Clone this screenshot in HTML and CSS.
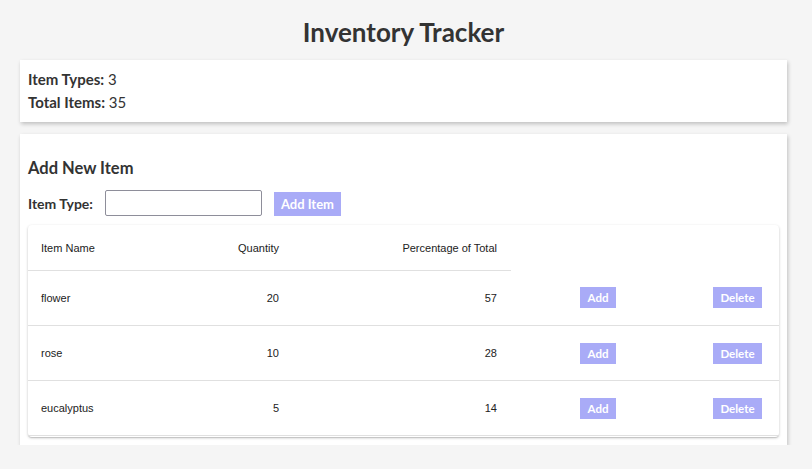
FILE: index.html
```html
<!DOCTYPE html>
<html>
<head>
<meta charset="utf-8">
<title>Inventory Tracker</title>
<link rel="stylesheet" href="styles.css">
</head>
<body>
<div class="app">
  <h1 class="title">Inventory Tracker</h1>
  <div class="card summary">
    <div class="line"><b>Item Types:</b> 3</div>
    <div class="line"><b>Total Items:</b> 35</div>
  </div>
  <div class="card main">
    <h3 class="section-title">Add New Item</h3>
    <div class="form-row">
      <label class="label">Item Type:</label>
      <input class="text-input" type="text">
      <button class="btn btn-lg">Add Item</button>
    </div>
    <div class="paper">
      <table class="table">
        <colgroup>
          <col class="c1"><col class="c2"><col class="c3"><col class="c4"><col class="c5">
        </colgroup>
        <thead>
          <tr class="head-row">
            <th class="left">Item Name</th>
            <th class="right">Quantity</th>
            <th class="right">Percentage of Total</th>
          </tr>
        </thead>
        <tbody>
          <tr>
            <td class="left">flower</td>
            <td class="right">20</td>
            <td class="right">57</td>
            <td class="center"><button class="btn btn-sm btn-add">Add</button></td>
            <td class="right end"><button class="btn btn-sm btn-del">Delete</button></td>
          </tr>
          <tr>
            <td class="left">rose</td>
            <td class="right">10</td>
            <td class="right">28</td>
            <td class="center"><button class="btn btn-sm btn-add">Add</button></td>
            <td class="right end"><button class="btn btn-sm btn-del">Delete</button></td>
          </tr>
          <tr>
            <td class="left">eucalyptus</td>
            <td class="right">5</td>
            <td class="right">14</td>
            <td class="center"><button class="btn btn-sm btn-add">Add</button></td>
            <td class="right end"><button class="btn btn-sm btn-del">Delete</button></td>
          </tr>
        </tbody>
      </table>
    </div>
  </div>
</div>
</body>
</html>
```
FILE: styles.css
```css
html, body {
  margin: 0;
  padding: 0;
  background: #f5f5f5;
}
body {
  font-family: Lato, "Liberation Sans", sans-serif;
  color: #333;
}
.app {
  margin: 0 25px 0 20px;
  padding-top: 17px;
}
.title {
  margin: 0 0 12px 0;
  text-align: center;
  font-size: 26px;
  font-weight: 700;
  line-height: 31px;
  color: #333;
}
.card {
  background: #fff;
  box-shadow: 1px 2px 4px rgba(0, 0, 0, 0.22);
  padding: 8px;
}
.summary {
  font-size: 15px;
  line-height: 23px;
}
.summary b {
  font-weight: 700;
}
.main {
  margin-top: 12px;
  padding-bottom: 8px;
}
.section-title {
  margin: 16px 0 12px 0;
  font-size: 16.5px;
  line-height: 20px;
  font-weight: 700;
}
.form-row {
  display: flex;
  align-items: center;
  height: 26px;
}
.label {
  font-size: 14px;
  font-weight: 700;
  margin-right: 12px;
}
.text-input {
  box-sizing: border-box;
  width: 157px;
  height: 26px;
  border: 1px solid #8e8e9a;
  border-radius: 2px;
  margin: 0 12px 0 0;
  padding: 0 4px;
  background: #fff;
}
.btn {
  border: none;
  background: #a9abf7;
  color: #fff;
  font-family: Lato, "Liberation Sans", sans-serif;
  font-weight: 700;
  padding: 0;
  cursor: pointer;
}
.btn-lg {
  width: 67px;
  height: 24px;
  font-size: 13px;
  margin-top: 2px;
}
.btn-sm {
  height: 21px;
  font-size: 11.5px;
  padding: 0;
}
.btn-add { width: 36px; }
.btn-del { width: 49px; }
.paper {
  margin-top: 9px;
  background: #fff;
  border-radius: 4px;
  box-shadow: 0 1px 3px rgba(0, 0, 0, 0.2), 0 1px 1px rgba(0, 0, 0, 0.12);
  overflow: hidden;
  padding-bottom: 1px;
}
.table {
  width: 100%;
  border-collapse: collapse;
  table-layout: fixed;
  font-family: "Liberation Sans", Arial, sans-serif;
  font-size: 11px;
  color: #222;
}
.c1 { width: 137px; }
.c2 { width: 128px; }
.c3 { width: 218px; }
.c4 { width: 174px; }
.c5 { width: 94px; }
.table th {
  font-weight: 400;
  height: 45px;
  padding: 0 14px 0 13px;
  border-bottom: 1px solid #e0e0e0;
}
.table td {
  height: 54px;
  padding: 0 14px 0 13px;
  border-bottom: 1px solid #e0e0e0;
}
.left { text-align: left; }
.right { text-align: right; }
.center { text-align: center; }
.table td.center { padding: 0; }
.table td.end { padding-right: 17px; }
```
